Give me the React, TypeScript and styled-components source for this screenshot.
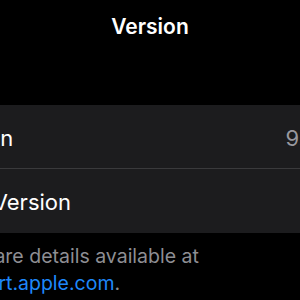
import React from "react";
import styled, { createGlobalStyle } from "styled-components";

const Global = createGlobalStyle`
  html, body {
    margin: 0;
    padding: 0;
    background: #000;
  }
  body {
    font-family: Inter, "Noto Sans", "Liberation Sans", sans-serif;
    -webkit-font-smoothing: antialiased;
  }
`;

const Viewport = styled.div`
  width: 300px;
  height: 300px;
  overflow: hidden;
  background: #000;
`;

const Screen = styled.div`
  width: 460px;
  margin-left: -80px;
  display: flex;
  flex-direction: column;
`;

const NavBar = styled.header`
  padding-top: 14px;
  height: 25px;
  text-align: center;
  font-size: 21px;
  font-weight: 600;
  line-height: 25px;
  color: #fff;
`;

const Group = styled.section`
  margin-top: 66px;
  background: #1c1c1e;
  padding-left: 15px;
  padding-bottom: 1px;
`;

const Row = styled.div`
  display: flex;
  align-items: center;
  justify-content: space-between;
  height: 63px;
  padding-right: 62px;
  font-size: 22px;
  line-height: 28px;
  color: #fff;
  & + & {
    border-top: 1px solid #3a3a3c;
  }
`;

const Label = styled.span`
  padding-top: 2px;
`;

const Value = styled.span`
  padding-top: 2px;
  color: #98989f;
`;

const Footer = styled.p`
  margin: 0;
  padding: 10px 0 0 21px;
  width: 280px;
  font-size: 19.5px;
  line-height: 27px;
  color: #8e8e93;
`;

const Link = styled.a`
  color: #1e88fa;
  text-decoration: none;
`;

export default function App() {
  return (
    <Viewport>
      <Global />
      <Screen>
        <NavBar>Version</NavBar>
        <Group>
          <Row>
            <Label>Version</Label>
            <Value>9.5</Value>
          </Row>
          <Row>
            <Label>Build Version</Label>
          </Row>
        </Group>
        <Footer>
          Software details available at <Link href="#">support.apple.com</Link>.
        </Footer>
      </Screen>
    </Viewport>
  );
}
